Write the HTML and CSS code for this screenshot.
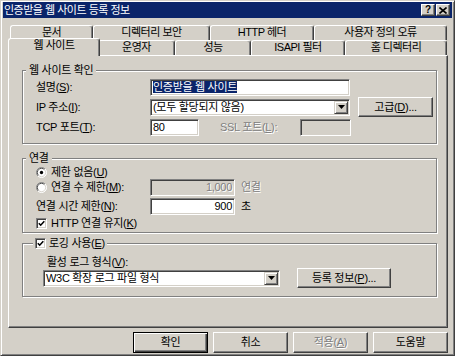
FILE: index.html
```html
<!DOCTYPE html>
<html>

<head>
  <meta charset="utf-8">
  <title>인증받을 웹 사이트 등록 정보</title>
  <link rel="stylesheet" href="styles.css">
</head>

<body>
  <div class="window">
    <div class="caption">
      <span class="caption-title">인증받을 웹 사이트 등록 정보</span>
      <span class="caption-btn help">?</span>
      <span class="caption-btn close">
        <svg width="8" height="7" viewBox="0 0 8 7"><path d="M0.5 0.5L7.5 6.5M7.5 0.5L0.5 6.5" stroke="#000" stroke-width="1.6"/></svg>
      </span>
    </div>

    <div class="tabs">
      <div class="tab-row back">
        <div class="tab">문서</div>
        <div class="tab">디렉터리 보안</div>
        <div class="tab">HTTP 헤더</div>
        <div class="tab">사용자 정의 오류</div>
      </div>
      <div class="tab-row front">
        <div class="tab active">웹 사이트</div>
        <div class="tab">운영자</div>
        <div class="tab">성능</div>
        <div class="tab">ISAPI 필터</div>
        <div class="tab">홈 디렉터리</div>
      </div>
    </div>

    <div class="page">
      <!-- 웹 사이트 확인 -->
      <div class="group site">
        <div class="legend">웹 사이트 확인</div>
        <div class="row desc">
          <span class="lbl">설명(<u>S</u>):</span>
          <div class="field wide"><span class="selected">인증받을 웹 사이트</span></div>
        </div>
        <div class="row ip">
          <span class="lbl">IP 주소(<u>I</u>):</span>
          <div class="field combo wide">
            <span class="combo-text">(모두 할당되지 않음)</span>
            <span class="drop"><svg width="7" height="4" viewBox="0 0 7 4"><path d="M0 0H7L3.5 4Z" fill="#000"/></svg></span>
          </div>
          <button class="btn adv">고급(<u>D</u>)...</button>
        </div>
        <div class="row tcp">
          <span class="lbl">TCP 포트(<u>T</u>):</span>
          <div class="field port">80</div>
          <span class="lbl ssl dim">SSL 포트(<u>L</u>):</span>
          <div class="field port-ssl disabled"></div>
        </div>
      </div>

      <!-- 연결 -->
      <div class="group conn">
        <div class="legend">연결</div>
        <div class="row opt">
          <span class="lbl choice">
            <svg class="radio" width="11" height="11" viewBox="0 0 12 12">
              <circle cx="6" cy="6" r="5.5" fill="#fff"/>
              <path d="M2.1 9.9A5.5 5.5 0 0 1 9.9 2.1" stroke="#808080" fill="none"/>
              <path d="M9.9 2.1A5.5 5.5 0 0 1 2.1 9.9" stroke="#fff" fill="none"/>
              <path d="M2.8 9.2A4.5 4.5 0 0 1 9.2 2.8" stroke="#404040" fill="none"/>
              <path d="M9.2 2.8A4.5 4.5 0 0 1 2.8 9.2" stroke="#d4d0c8" fill="none"/>
              <circle cx="6" cy="6" r="1.8" fill="#000"/>
            </svg>
            <span>제한 없음(<u>U</u>)</span>
          </span>
        </div>
        <div class="row limit">
          <span class="lbl choice">
            <svg class="radio" width="11" height="11" viewBox="0 0 12 12">
              <circle cx="6" cy="6" r="5.5" fill="#fff"/>
              <path d="M2.1 9.9A5.5 5.5 0 0 1 9.9 2.1" stroke="#808080" fill="none"/>
              <path d="M9.9 2.1A5.5 5.5 0 0 1 2.1 9.9" stroke="#fff" fill="none"/>
              <path d="M2.8 9.2A4.5 4.5 0 0 1 9.2 2.8" stroke="#404040" fill="none"/>
              <path d="M9.2 2.8A4.5 4.5 0 0 1 2.8 9.2" stroke="#d4d0c8" fill="none"/>
            </svg>
            <span>연결 수 제한(<u>M</u>):</span>
          </span>
          <div class="field num disabled">1,000</div>
          <span class="unit dim">연결</span>
        </div>
        <div class="row timeout">
          <span class="lbl">연결 시간 제한(<u>N</u>):</span>
          <div class="field num">900</div>
          <span class="unit">초</span>
        </div>
        <div class="row keep">
          <span class="check"><svg width="7" height="7" viewBox="0 0 7 7"><path d="M0.8 3.2L2.7 5.2L6.3 1.3" stroke="#000" stroke-width="1.6" fill="none"/></svg></span>
          <span class="check-text">HTTP 연결 유지(<u>K</u>)</span>
        </div>
      </div>

      <!-- 로깅 -->
      <div class="group log">
        <div class="legend">
          <span class="check"><svg width="7" height="7" viewBox="0 0 7 7"><path d="M0.8 3.2L2.7 5.2L6.3 1.3" stroke="#000" stroke-width="1.6" fill="none"/></svg></span>
          <span>로깅 사용(<u>E</u>)</span>
        </div>
        <div class="fmt-label">활성 로그 형식(<u>V</u>):</div>
        <div class="row fmt">
          <div class="field combo fmt-box">
            <span class="combo-text">W3C 확장 로그 파일 형식</span>
            <span class="drop"><svg width="7" height="4" viewBox="0 0 7 4"><path d="M0 0H7L3.5 4Z" fill="#000"/></svg></span>
          </div>
          <button class="btn props">등록 정보(<u>P</u>)...</button>
        </div>
      </div>
    </div>

    <div class="actions">
      <button class="btn default">확인</button>
      <button class="btn">취소</button>
      <button class="btn dim">적용(<u>A</u>)</button>
      <button class="btn">도움말</button>
    </div>
  </div>
</body>

</html>
```

FILE: styles.css
```css
body {
  margin: 0;
  background-color: #d4d0c8;
  font-family: "Liberation Sans", "Noto Sans CJK KR", sans-serif;
  font-size: 11px;
  line-height: 13px;
  letter-spacing: -0.3px;
  color: #000;
}

.window {
  box-sizing: border-box;
  width: 455px;
  height: 356px;
  padding: 1px 2px;
  border: 1px solid;
  border-color: #d4d0c8 #404040 #404040 #d4d0c8;
  box-shadow: inset 1px 1px #fff, inset -1px -1px #808080;
}

/* title bar */
.caption {
  display: flex;
  align-items: center;
  height: 16px;
  padding: 0 2px 0 1px;
  background-color: #0a246a;
  color: #fff;
  letter-spacing: -0.5px;
}

.caption-title {
  flex: 1;
  white-space: nowrap;
}

.caption-btn {
  box-sizing: border-box;
  display: flex;
  align-items: center;
  justify-content: center;
  width: 14px;
  height: 12px;
  border: 1px solid;
  border-color: #fff #404040 #404040 #fff;
  box-shadow: inset -1px -1px #808080;
  background-color: #d4d0c8;
  color: #000;
  font-weight: bold;
  font-size: 10px;
  line-height: 10px;
  letter-spacing: 0;
}

.caption-btn.close {
  margin-left: 1px;
}

/* tabs */
.tabs {
  width: 437px;
  margin: 7px 0 0 7px;
  letter-spacing: -0.5px;
}

.tab-row {
  display: grid;
  grid-template-rows: 15px;
}

.tab-row.back {
  grid-template-columns: 83px 117px 104px 133px;
}

.tab-row.front {
  grid-template-columns: 88px 77px 76px 94px 102px;
}

.tab {
  box-sizing: border-box;
  height: 15px;
  border: 1px solid;
  border-bottom: 0;
  border-color: #fff #404040 #404040 #fff;
  border-radius: 3px 3px 0 0;
  box-shadow: inset -1px 0 #808080;
  text-align: center;
  white-space: nowrap;
}

.tab.active {
  position: relative;
  z-index: 1;
  height: 18px;
  margin: -2px -2px 0;
  background-color: #d4d0c8;
}

/* property page */
.page {
  box-sizing: border-box;
  width: 440px;
  height: 273px;
  margin-left: 5px;
  padding: 14px 10px 0 13px;
  border: 1px solid;
  border-color: #fff #404040 #404040 #fff;
  box-shadow: inset -1px -1px #808080;
}

.group {
  border: 1px solid #808080;
  box-shadow: inset 1px 1px #fff, 1px 1px #fff;
  padding: 0 0 7px 13px;
}

.legend {
  display: table;
  margin: -7px 0 0 -10px;
  padding: 0 3px;
  background-color: #d4d0c8;
  white-space: nowrap;
}

.row {
  display: flex;
  align-items: center;
}

.lbl {
  flex: none;
  width: 114px;
  white-space: nowrap;
}

.site .desc {
  height: 17px;
  margin-top: 2px;
}

.site .ip {
  height: 20px;
  margin-top: 1px;
}

.site .tcp {
  height: 17px;
  margin-top: 2px;
}

.lbl.ssl {
  width: 80px;
  margin-left: 21px;
}

.dim {
  color: #808080;
  text-shadow: 1px 1px #fff;
}

/* edit boxes */
.field {
  box-sizing: border-box;
  flex: none;
  height: 17px;
  padding: 0 2px;
  border: 1px solid;
  border-color: #808080 #fff #fff #808080;
  box-shadow: inset 1px 1px #404040, inset -1px -1px #d4d0c8;
  background-color: #fff;
  line-height: 15px;
  white-space: nowrap;
  overflow: hidden;
}

.field.wide {
  width: 200px;
}

.field.port {
  width: 49px;
}

.field.port-ssl {
  width: 51px;
}

.field.num {
  width: 85px;
  text-align: right;
}

.field.disabled {
  background-color: #d4d0c8;
  color: #808080;
  text-shadow: 1px 1px #fff;
}

.selected {
  background-color: #0a246a;
  color: #fff;
}

.combo {
  display: flex;
  align-items: center;
  padding: 1px 1px 1px 2px;
}

.combo-text {
  flex: 1;
  line-height: 13px;
}

.drop {
  box-sizing: border-box;
  display: flex;
  align-items: center;
  justify-content: center;
  width: 14px;
  height: 13px;
  border: 1px solid;
  border-color: #d4d0c8 #404040 #404040 #d4d0c8;
  box-shadow: inset 1px 1px #fff, inset -1px -1px #808080;
  background-color: #d4d0c8;
}

/* push buttons */
.btn {
  box-sizing: border-box;
  flex: none;
  height: 20px;
  padding: 0;
  border: 1px solid;
  border-color: #fff #404040 #404040 #fff;
  box-shadow: inset -1px -1px #808080;
  background-color: #d4d0c8;
  font: inherit;
  letter-spacing: inherit;
  color: #000;
}

.btn.dim {
  color: #808080;
}

.btn.adv {
  width: 75px;
  margin-left: 8px;
}

.btn.default {
  border-color: #000;
  box-shadow: inset 1px 1px #fff, inset -1px -1px #404040, inset -2px -2px #808080;
}

/* connections */
.group.conn {
  margin-top: 14px;
  padding-bottom: 2px;
}

.conn .opt {
  height: 14px;
}

.conn .limit {
  height: 17px;
}

.conn .timeout {
  height: 17px;
  margin-top: 2px;
}

.conn .keep {
  height: 13px;
  margin-top: 2px;
  gap: 4px;
}

.choice {
  display: flex;
  align-items: center;
  gap: 4px;
}

.radio {
  flex: none;
}

.unit {
  margin-left: 6px;
}

.check {
  box-sizing: border-box;
  display: flex;
  align-items: center;
  justify-content: center;
  flex: none;
  width: 11px;
  height: 11px;
  border: 1px solid;
  border-color: #808080 #fff #fff #808080;
  box-shadow: inset 1px 1px #404040, inset -1px -1px #d4d0c8;
  background-color: #fff;
}

/* logging */
.group.log {
  margin-top: 10px;
  padding: 0 0 8px 20px;
}

.log .legend {
  display: flex;
  align-items: center;
  gap: 3px;
  width: max-content;
  padding: 0 2px;
}

.fmt-label {
  margin: 6px 0 0 4px;
}

.log .fmt {
  height: 20px;
  margin-top: -1px;
}

.field.fmt-box {
  width: 237px;
}

.btn.props {
  width: 94px;
  margin-left: 17px;
}

/* dialog buttons */
.actions {
  display: flex;
  justify-content: flex-end;
  gap: 5px;
  margin: 4px 4px 0 0;
}

.actions .btn {
  width: 75px;
  height: 21px;
}
```
